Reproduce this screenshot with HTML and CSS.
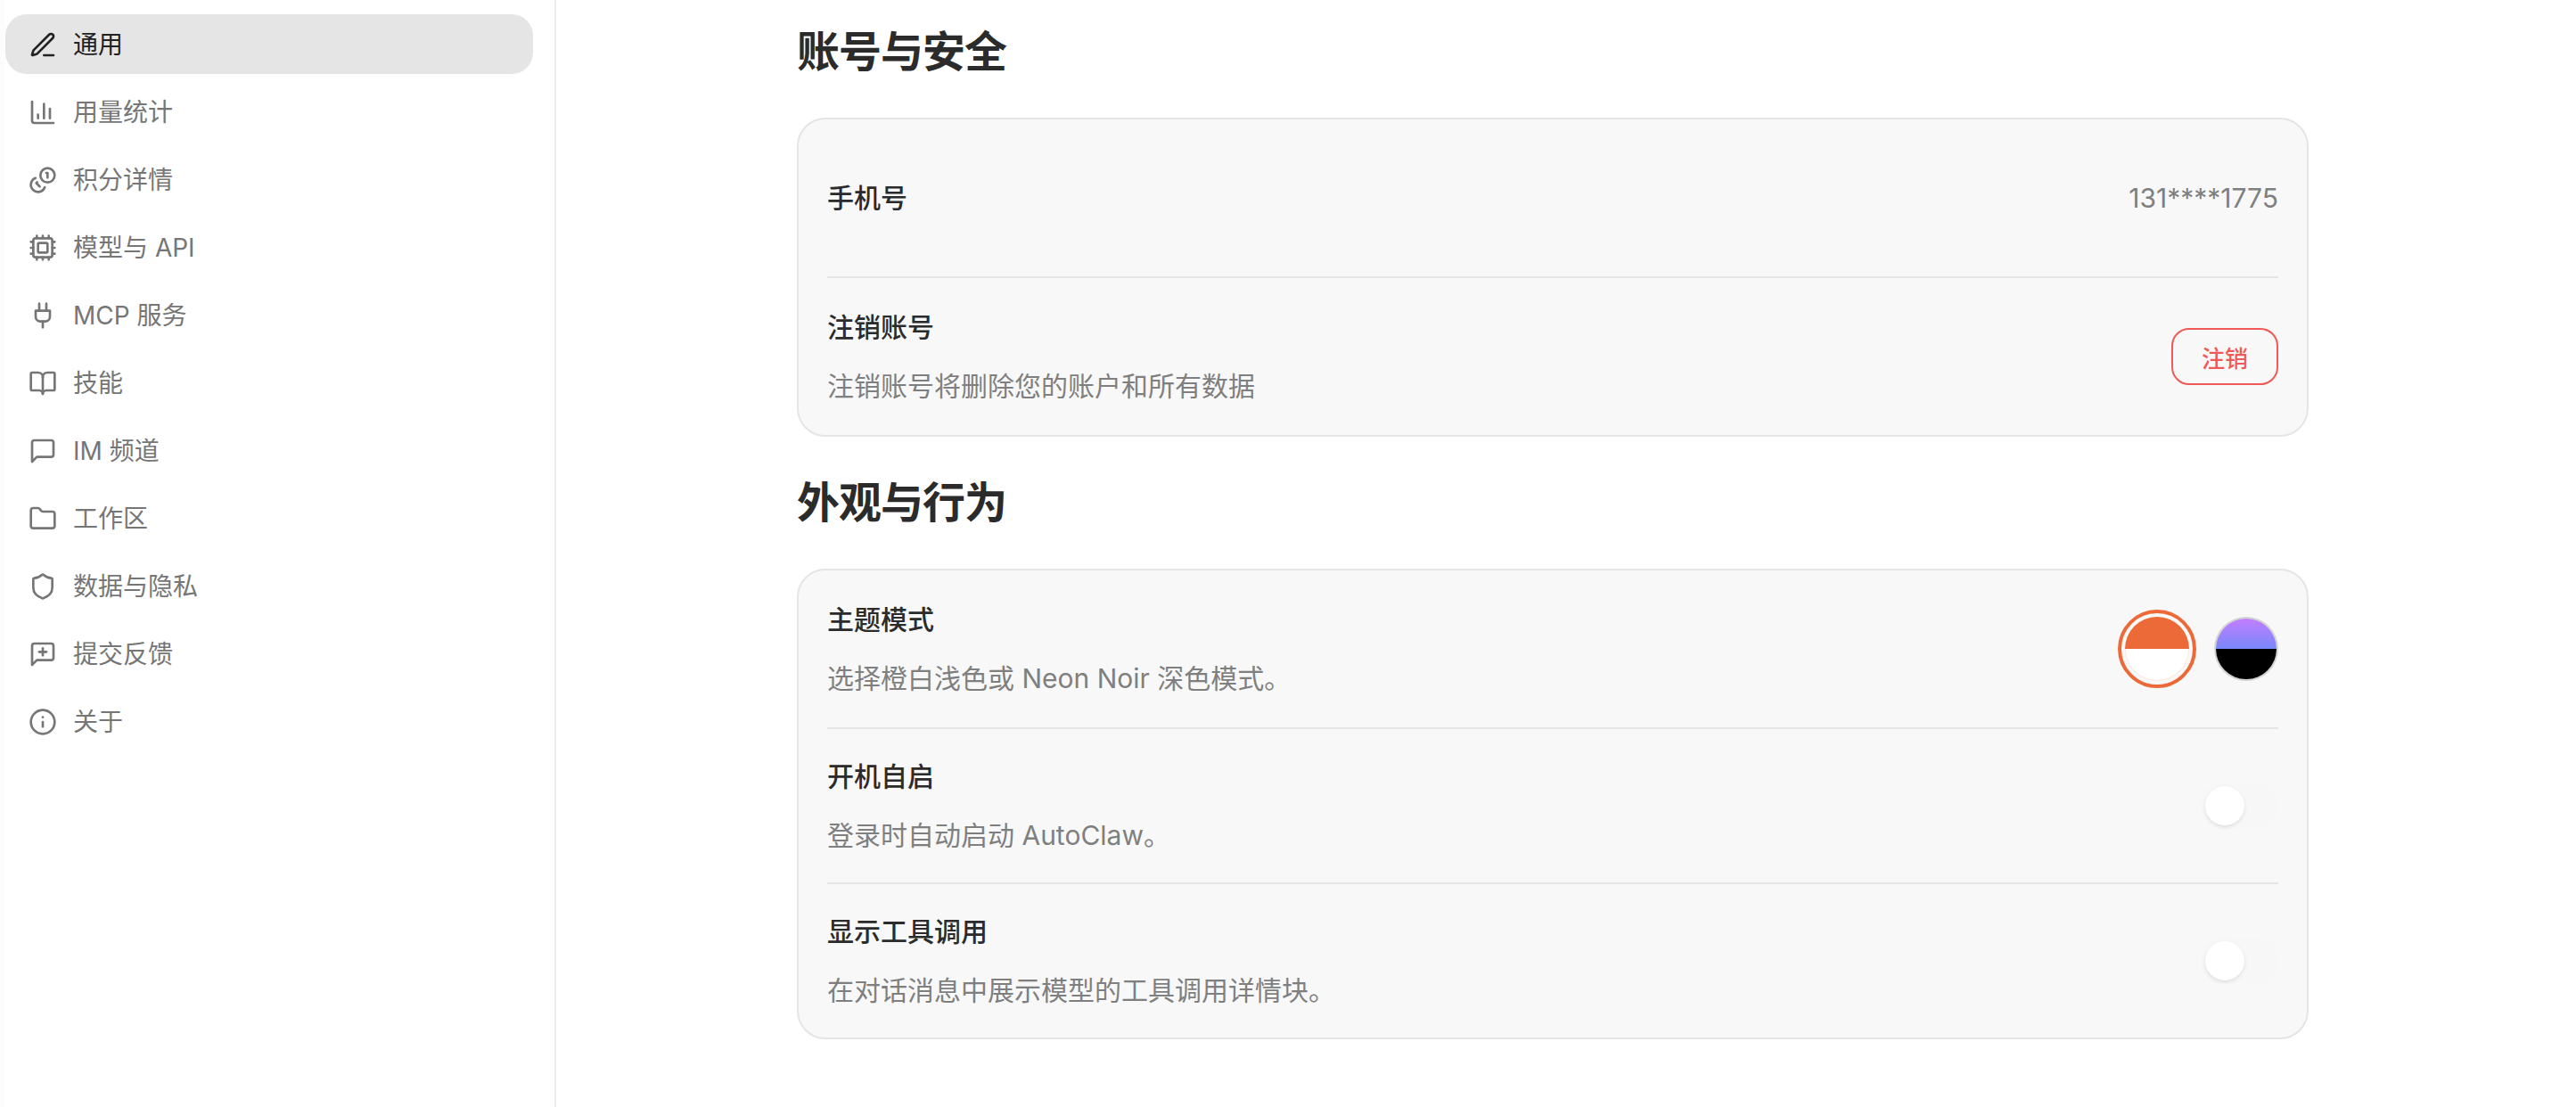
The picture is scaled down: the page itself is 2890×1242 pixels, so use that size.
FILE: index.html
```html
<!DOCTYPE html>
<html lang="zh-CN">
<head>
  <meta charset="utf-8">
  <title>设置</title>
  <link rel="stylesheet" href="styles.css">
</head>
<body>
  <div class="app">
    <aside class="sidebar">
      <nav class="nav">
        <a class="nav-item active">
          <svg class="icon" viewBox="0 0 24 24"><path d="M13 21h8"/><path d="M17.4 3.6a2.1 2.1 0 0 1 3 3L7.4 19.6a2 2 0 0 1-.9.5l-2.9.9a.5.5 0 0 1-.6-.6l.9-2.9a2 2 0 0 1 .5-.9z"/></svg>
          <span>通用</span>
        </a>
        <a class="nav-item">
          <svg class="icon" viewBox="0 0 24 24"><path d="M3 3v16a2 2 0 0 0 2 2h16"/><path d="M18 17V9"/><path d="M13 17V5"/><path d="M8 17v-3"/></svg>
          <span>用量统计</span>
        </a>
        <a class="nav-item">
          <svg class="icon" viewBox="0 0 24 24"><circle cx="16" cy="8" r="6"/><path d="M5.91 10.37A6 6 0 1 0 13.66 18"/><path d="M15 6h1v4"/><path d="m7.29 13.88-.7.71 2.82 2.82"/></svg>
          <span>积分详情</span>
        </a>
        <a class="nav-item">
          <svg class="icon" viewBox="0 0 24 24"><path d="M12 20v2M12 2v2M17 20v2M17 2v2M2 12h2M2 17h2M2 7h2M20 12h2M20 17h2M20 7h2M7 20v2M7 2v2"/><rect x="4" y="4" width="16" height="16" rx="2"/><rect x="8" y="8" width="8" height="8" rx="1"/></svg>
          <span>模型与 API</span>
        </a>
        <a class="nav-item">
          <svg class="icon" viewBox="0 0 24 24"><path d="M12 22v-5"/><path d="M9 8V2"/><path d="M15 8V2"/><path d="M18 8v5a4 4 0 0 1-4 4h-4a4 4 0 0 1-4-4V8Z"/></svg>
          <span>MCP 服务</span>
        </a>
        <a class="nav-item">
          <svg class="icon" viewBox="0 0 24 24"><path d="M12 7v14"/><path d="M3 18a1 1 0 0 1-1-1V4a1 1 0 0 1 1-1h5a4 4 0 0 1 4 4 4 4 0 0 1 4-4h5a1 1 0 0 1 1 1v13a1 1 0 0 1-1 1h-6a3 3 0 0 0-3 3 3 3 0 0 0-3-3z"/></svg>
          <span>技能</span>
        </a>
        <a class="nav-item">
          <svg class="icon" viewBox="0 0 24 24"><path d="M21 15a2 2 0 0 1-2 2H7l-4 4V5a2 2 0 0 1 2-2h14a2 2 0 0 1 2 2z"/></svg>
          <span>IM 频道</span>
        </a>
        <a class="nav-item">
          <svg class="icon" viewBox="0 0 24 24"><path d="M20 20a2 2 0 0 0 2-2V8a2 2 0 0 0-2-2h-7.9a2 2 0 0 1-1.69-.9L9.6 3.9A2 2 0 0 0 7.93 3H4a2 2 0 0 0-2 2v13a2 2 0 0 0 2 2Z"/></svg>
          <span>工作区</span>
        </a>
        <a class="nav-item">
          <svg class="icon" viewBox="0 0 24 24"><path d="M20 13c0 5-3.5 7.5-7.66 8.95a1 1 0 0 1-.67-.01C7.5 20.5 4 18 4 13V6a1 1 0 0 1 1-1c2 0 4.5-1.2 6.24-2.72a1.17 1.17 0 0 1 1.52 0C14.51 3.81 17 5 19 5a1 1 0 0 1 1 1z"/></svg>
          <span>数据与隐私</span>
        </a>
        <a class="nav-item">
          <svg class="icon" viewBox="0 0 24 24"><path d="M21 15a2 2 0 0 1-2 2H7l-4 4V5a2 2 0 0 1 2-2h14a2 2 0 0 1 2 2z"/><path d="M12 7v6"/><path d="M9 10h6"/></svg>
          <span>提交反馈</span>
        </a>
        <a class="nav-item">
          <svg class="icon" viewBox="0 0 24 24"><circle cx="12" cy="12" r="10"/><path d="M12 16v-4"/><path d="M12 8h.01"/></svg>
          <span>关于</span>
        </a>
      </nav>
    </aside>

    <main class="main">
      <section class="section">
        <h2 class="section-title">账号与安全</h2>
        <div class="card">
          <div class="row row-tall">
            <div class="row-text">
              <div class="row-label">手机号</div>
            </div>
            <div class="row-value">131****1775</div>
          </div>
          <div class="row row-tall">
            <div class="row-text">
              <div class="row-label">注销账号</div>
              <div class="row-desc">注销账号将删除您的账户和所有数据</div>
            </div>
            <button class="btn-danger">注销</button>
          </div>
        </div>
      </section>

      <section class="section">
        <h2 class="section-title">外观与行为</h2>
        <div class="card">
          <div class="row row-tall">
            <div class="row-text">
              <div class="row-label">主题模式</div>
              <div class="row-desc">选择橙白浅色或 Neon Noir 深色模式。</div>
            </div>
            <div class="theme-picker">
              <div class="theme-selected">
                <div class="swatch swatch-light"></div>
              </div>
              <div class="swatch swatch-dark"></div>
            </div>
          </div>
          <div class="row">
            <div class="row-text">
              <div class="row-label">开机自启</div>
              <div class="row-desc">登录时自动启动 AutoClaw。</div>
            </div>
            <div class="toggle"><div class="toggle-knob"></div></div>
          </div>
          <div class="row">
            <div class="row-text">
              <div class="row-label">显示工具调用</div>
              <div class="row-desc">在对话消息中展示模型的工具调用详情块。</div>
            </div>
            <div class="toggle"><div class="toggle-knob"></div></div>
          </div>
        </div>
      </section>
    </main>
  </div>
</body>
</html>
```

FILE: styles.css
```css
* {
  box-sizing: border-box;
}

body {
  margin: 0;
  background: #fff;
  color: #2b2b2b;
  font-family: Inter, "Noto Sans CJK SC", sans-serif;
  overflow: hidden;
}

.app {
  display: flex;
  height: 100vh;
}

/* sidebar */
.sidebar {
  width: 624px;
  flex-shrink: 0;
  background: #fff;
  border-right: 2px solid #ececec;
  box-shadow: inset 6px 0 0 #fcfcfc;
  padding: 16px 24px 0 6px;
}

.nav {
  display: flex;
  flex-direction: column;
  gap: 9px;
}

.nav-item {
  display: flex;
  align-items: center;
  gap: 18px;
  height: 67px;
  padding-left: 26px;
  border-radius: 24px;
  font-size: 28px;
  color: #767676;
}

.nav-item span {
  margin-top: -3px;
}

.nav-item.active {
  background: #e5e5e5;
  color: #222;
}

.icon {
  width: 32px;
  height: 32px;
  flex-shrink: 0;
  fill: none;
  stroke: currentColor;
  stroke-width: 2;
  stroke-linecap: round;
  stroke-linejoin: round;
}

/* main */
.main {
  flex: 1;
  padding: 22px 0 0 270px;
}

.section {
  width: 1696px;
  margin-bottom: 38px;
}

.section-title {
  margin: 0 0 38px;
  font-size: 48px;
  line-height: 72px;
  font-weight: 700;
  letter-spacing: -1px;
  color: #2b2b2b;
}

.card {
  background: #f8f8f8;
  border: 2px solid #e5e5e5;
  border-radius: 32px;
  padding: 0 32px;
}

.row {
  display: flex;
  align-items: center;
  justify-content: space-between;
  min-height: 172px;
  border-bottom: 2px solid #e5e5e5;
}

.row:last-child {
  border-bottom: none;
}

.row-tall {
  min-height: 176px;
}

.row-tall:not(:last-child) {
  min-height: 178px;
}

.row:not(.row-tall):not(:last-child) {
  min-height: 174px;
}

.row-text {
  display: flex;
  flex-direction: column;
  gap: 21px;
}

.row-label {
  font-size: 30px;
  line-height: 45px;
  font-weight: 500;
  color: #2b2b2b;
}

.row-desc {
  font-size: 30px;
  line-height: 45px;
  color: #7f7f7f;
}

.row-value {
  font-size: 30px;
  color: #7f7f7f;
}

.btn-danger {
  width: 120px;
  height: 64px;
  background: transparent;
  border: 2px solid #ef5a56;
  border-radius: 20px;
  font-family: inherit;
  font-size: 26px;
  font-weight: 500;
  color: #ef5a56;
}

/* theme */
.theme-picker {
  display: flex;
  align-items: center;
  gap: 20px;
}

.theme-selected {
  padding: 4px;
  border: 4px solid #ec6a37;
  border-radius: 50%;
}

.swatch {
  width: 72px;
  height: 72px;
  border-radius: 50%;
}

.swatch-light {
  border: 1px solid rgba(236, 106, 55, 0.15);
  background: linear-gradient(#ec6a37 50%, #fff 50%) border-box;
}

.swatch-dark {
  border: 2px solid rgba(0, 0, 0, 0.15);
  background: linear-gradient(#c77dff, #7888fa 50%, #000 50%) border-box;
  background-clip: padding-box;
}

/* toggle, off state */
.toggle {
  display: flex;
  align-items: center;
  width: 88px;
  height: 52px;
  padding-left: 6px;
  border-radius: 26px;
  background: #f7f7f7;
}

.toggle-knob {
  width: 44px;
  height: 44px;
  border-radius: 50%;
  background: #fff;
  box-shadow: 0 2px 4px rgba(0, 0, 0, 0.1);
}
```
